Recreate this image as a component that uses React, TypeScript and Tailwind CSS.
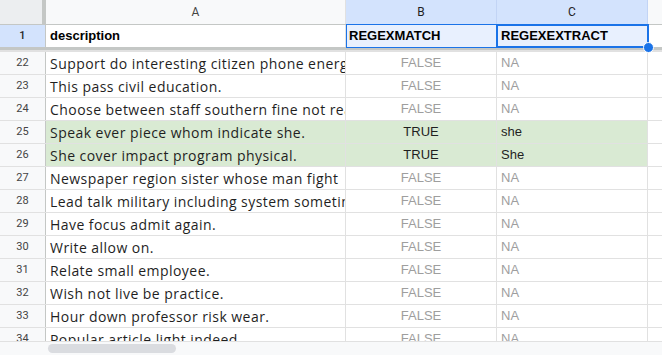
import React from "react";

const rows: { n: number; a: string; b: string; c: string; hit?: boolean }[] = [
  { n: 22, a: "Support do interesting citizen phone energy", b: "FALSE", c: "NA" },
  { n: 23, a: "This pass civil education.", b: "FALSE", c: "NA" },
  { n: 24, a: "Choose between staff southern fine not really", b: "FALSE", c: "NA" },
  { n: 25, a: "Speak ever piece whom indicate she.", b: "TRUE", c: "she", hit: true },
  { n: 26, a: "She cover impact program physical.", b: "TRUE", c: "She", hit: true },
  { n: 27, a: "Newspaper region sister whose man fight", b: "FALSE", c: "NA" },
  { n: 28, a: "Lead talk military including system sometimes", b: "FALSE", c: "NA" },
  { n: 29, a: "Have focus admit again.", b: "FALSE", c: "NA" },
  { n: 30, a: "Write allow on.", b: "FALSE", c: "NA" },
  { n: 31, a: "Relate small employee.", b: "FALSE", c: "NA" },
  { n: 32, a: "Wish not live be practice.", b: "FALSE", c: "NA" },
  { n: 33, a: "Hour down professor risk wear.", b: "FALSE", c: "NA" },
  { n: 34, a: "Popular article light indeed.", b: "FALSE", c: "NA" },
];

const arial = { fontFamily: '"Liberation Sans", Arial, sans-serif' };
const desc = { fontFamily: '"Open Sans", "Noto Sans", sans-serif' };
const rnum = { fontFamily: 'Roboto, "Liberation Sans", sans-serif' };

export default function App() {
  return (
    <div className="relative w-[662px] h-[355px] overflow-hidden bg-white">
      {/* column header row */}
      <div className="flex h-[25px] bg-[#f8f9fa] border-b border-[#c4c7c5]">
        <div className="w-[46px] shrink-0 bg-[#eceef0] border-r-[4px] border-[#c4c7c5]" />
        <div className="w-[300px] shrink-0 border-r border-[#e1e1e1] flex items-center justify-center text-[12px] text-[#444]" style={rnum}>A</div>
        <div className="w-[151px] shrink-0 border-r border-[#c2d4f5] bg-[#d3e3fd] flex items-center justify-center text-[12px] text-[#1f1f1f]" style={rnum}>B</div>
        <div className="w-[151px] shrink-0 border-r border-[#c2d4f5] bg-[#d3e3fd] flex items-center justify-center text-[12px] text-[#1f1f1f]" style={rnum}>C</div>
        <div className="flex-1" />
      </div>
      {/* row 1 */}
      <div className="relative flex h-[22px]">
        <div className="w-[46px] shrink-0 bg-[#d3e3fd] border-r border-[#c4c7c5] flex items-center justify-center text-[11px] text-[#1f1f1f] font-medium" style={rnum}>1</div>
        <div className="w-[300px] shrink-0 border-r border-[#e1e1e1] flex items-center pl-[4px] text-[13px] font-bold text-black" style={arial}>description</div>
        <div className="w-[151px] shrink-0 bg-[#e8f0fe] flex items-center pl-[3px] text-[13px] font-bold text-black" style={arial}>REGEXMATCH</div>
        <div className="w-[151px] shrink-0 bg-[#e8f0fe] flex items-center pl-[4px] text-[13px] font-bold text-black" style={arial}>REGEXEXTRACT</div>
        <div className="flex-1" />
        {/* selection range */}
        <div className="absolute left-[346px] top-[-1px] w-[303px] h-[24px] border border-[#1a73e8] pointer-events-none" />
        <div className="absolute left-[496px] top-[-1px] w-[153px] h-[24px] border-2 border-[#1a73e8] pointer-events-none" />
        <div className="absolute left-[643px] top-[17px] w-[11px] h-[11px] rounded-full bg-[#1a73e8] border border-white z-10" />
      </div>
      {/* freeze bar */}
      <div className="h-[5px] bg-[#e1e1e1] border-t-[3px] border-[#c4c7c5] border-b border-b-[#e1e1e1]" />
      {/* data rows */}
      {rows.map((r) => (
        <div key={r.n} className="flex h-[23px] border-b border-[#e1e1e1]">
          <div className="w-[46px] shrink-0 bg-[#f8f9fa] border-r border-[#c4c7c5] flex items-center justify-center text-[11px] text-[#444]" style={rnum}>{r.n}</div>
          <div className={`w-[300px] shrink-0 border-r border-[#e1e1e1] flex items-center pl-[4px] overflow-hidden whitespace-nowrap text-[14px] tracking-[0.45px] text-[#1f1f1f] ${r.hit ? "bg-[#d9ead3]" : ""}`} style={desc}>{r.a}</div>
          <div className={`w-[151px] shrink-0 border-r border-[#e1e1e1] flex items-center justify-center text-[13px] ${r.hit ? "bg-[#d9ead3] text-[#1f1f1f]" : "text-[#9e9e9e]"}`} style={arial}>{r.b}</div>
          <div className={`w-[151px] shrink-0 border-r border-[#e1e1e1] flex items-center pl-[4px] text-[13px] ${r.hit ? "bg-[#d9ead3] text-[#1f1f1f]" : "text-[#9e9e9e]"}`} style={arial}>{r.c}</div>
          <div className="flex-1" />
        </div>
      ))}
      {/* bottom scrollbar */}
      <div className="absolute left-0 right-0 top-[341px] bottom-0 bg-[#f8f9fa] border-t border-[#e1e1e1] flex">
        <div className="w-[46px] shrink-0 bg-[#f8f9fa]" />
        <div className="mt-[2px] ml-[2px] w-[128px] h-[9px] rounded-full bg-[#dadce0]" />
      </div>
    </div>
  );
}
